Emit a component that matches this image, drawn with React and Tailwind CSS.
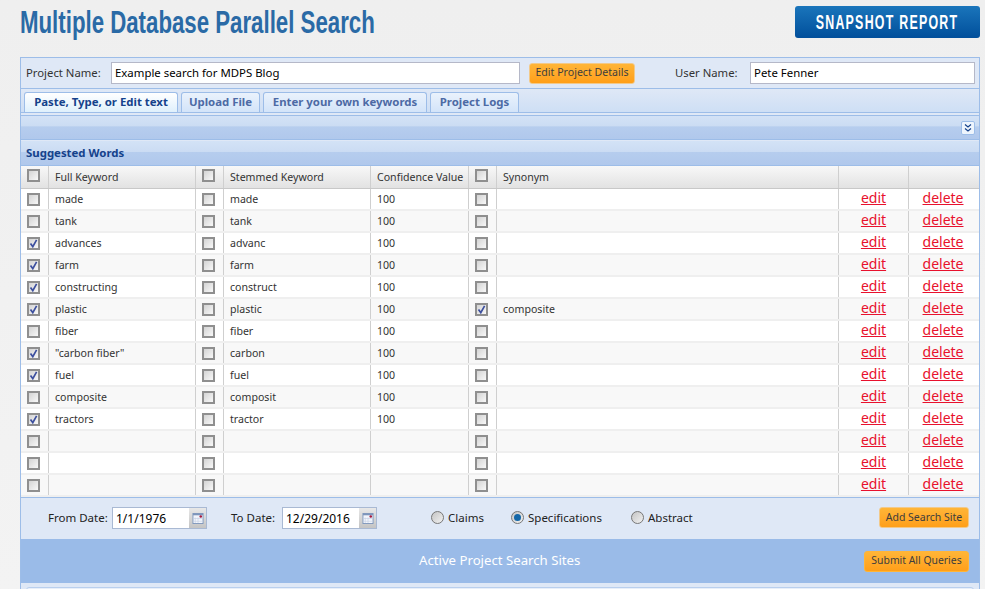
const FONT = "font-['Noto_Sans',_'Open_Sans',_sans-serif]";

const rows = [
  { a: false, full: 'made', stem: 'made', conf: '100' },
  { a: false, full: 'tank', stem: 'tank', conf: '100' },
  { a: true, full: 'advances', stem: 'advanc', conf: '100' },
  { a: true, full: 'farm', stem: 'farm', conf: '100' },
  { a: true, full: 'constructing', stem: 'construct', conf: '100' },
  { a: true, full: 'plastic', stem: 'plastic', conf: '100', syn: 'composite' },
  { a: false, full: 'fiber', stem: 'fiber', conf: '100' },
  { a: true, full: '"carbon fiber"', stem: 'carbon', conf: '100' },
  { a: true, full: 'fuel', stem: 'fuel', conf: '100' },
  { a: false, full: 'composite', stem: 'composit', conf: '100' },
  { a: true, full: 'tractors', stem: 'tractor', conf: '100' },
  { a: false },
  { a: false },
  { a: false },
];

function Check({ on }) {
  return (
    <span className="block w-[13px] h-[13px] border-2 border-[#8f8f8f] bg-gradient-to-br from-[#d4d4d4] to-[#f8f8f8] relative">
      {on && (
        <svg viewBox="0 0 13 13" className="absolute -left-[2px] -top-[2px] w-[13px] h-[13px]">
          <path d="M3.5 6.5 L5.8 9.6 L9.6 2.8" fill="none" stroke="#3c4f9e" strokeWidth="1.7" />
        </svg>
      )}
    </span>
  );
}

function Radio({ on }) {
  return (
    <span className="flex items-center justify-center w-[13px] h-[13px] rounded-full border border-[#777] bg-gradient-to-br from-[#c4c4c4] to-[#f2f2f2]">
      {on && <span className="block w-[7px] h-[7px] rounded-full bg-[#1467a8]" />}
    </span>
  );
}

function OrangeBtn({ children, className = '' }) {
  return (
    <button className={`h-[21px] rounded-[3px] border border-[#f2c98a] bg-gradient-to-b from-[#ffb537] to-[#ff9f18] text-[#3d3d3d] whitespace-nowrap ${className}`}>
      {children}
    </button>
  );
}

function CalIcon() {
  return (
    <span className="w-[17px] h-full flex items-start justify-center pt-[5px] bg-gradient-to-b from-[#e8e8e8] to-[#c4c4c4]">
      <svg viewBox="0 0 12 12" className="w-[12px] h-[11px]">
        <rect x="0.5" y="0.5" width="11" height="11" fill="#f2f5fb" stroke="#7d95bb" />
        <rect x="0.5" y="0.5" width="11" height="2" fill="#7d95bb" />
        <path d="M3 5V11M6 5V11M1 6H11M1 9H11" stroke="#c3cfe3" strokeWidth="0.7" />
        <circle cx="9" cy="3.8" r="1.4" fill="#a3163a" />
      </svg>
    </span>
  );
}

function DateBox({ value }) {
  return (
    <span className="flex items-stretch w-[95px] h-[22px] border border-[#a9b9d3] bg-white">
      <span className="flex-1 pl-[3px] text-[12px] leading-[21px] text-black">{value}</span>
      <CalIcon />
    </span>
  );
}

const CELL = 'flex items-center border-r border-[#cfcfcf] h-full';

function Row({ r, i }) {
  const bg = i % 2 === 0 ? 'bg-white' : 'bg-[#f8f8f8]';
  return (
    <div className={`flex h-[22px] border-b-2 border-[#efefef] text-[10.6px] text-[#333] ${bg}`}>
      <div className={`${CELL} w-[28px] justify-center pr-[2px]`}><Check on={r.a} /></div>
      <div className={`${CELL} w-[147px] pl-[6px] pt-[2px]`}>{r.full}</div>
      <div className={`${CELL} w-[28px] justify-center pr-[3px]`}><Check /></div>
      <div className={`${CELL} w-[147px] pl-[6px] pt-[2px]`}>{r.stem}</div>
      <div className={`${CELL} w-[98px] pl-[6px] pt-[2px]`}>{r.conf}</div>
      <div className={`${CELL} w-[28px] justify-center pr-[3px]`}><Check on={!!r.syn} /></div>
      <div className={`${CELL} w-[342px] pl-[6px] pt-[2px]`}>{r.syn}</div>
      <div className={`${CELL} w-[70px] justify-center pb-[3px] text-[14px] text-[#e8112d] underline`}>edit</div>
      <div className="flex items-center justify-center w-[70px] pr-[2px] pb-[3px] text-[14px] text-[#e8112d] underline">delete</div>
    </div>
  );
}

export default function App() {
  return (
    <div className={`w-[985px] h-[589px] overflow-hidden bg-gradient-to-b from-[#efefef] to-[#f3f3f3] ${FONT}`}>
      <div className="flex items-start justify-between h-[57px] pl-[20px] pr-[5px]">
        <h1 className="mt-[3px] text-[32px] leading-[38px] font-bold text-[#2a6aa6] font-['Liberation_Sans',_sans-serif] scale-x-[0.695] origin-left whitespace-nowrap">
          Multiple Database Parallel Search
        </h1>
        <div className="mt-[6px] flex items-center justify-center w-[185px] h-[32px] rounded-[3px] bg-gradient-to-b from-[#1a75bb] to-[#024f9b] text-white text-[20px] font-bold tracking-[2px] font-['Liberation_Sans',_sans-serif] whitespace-nowrap">
          <span className="scale-x-[0.62]">SNAPSHOT REPORT</span>
        </div>
      </div>

      <div className="mx-[20px] w-[960px] h-[532px] border border-b-0 border-[#9dbde8] bg-[#dfe8f6] text-[#333]">
        {/* project line */}
        <div className="flex items-center h-[31px] border-b border-[#9dbde8] pl-[5px] text-[11.3px]">
          <span className="w-[85px]">Project Name:</span>
          <div className="w-[409px] h-[22px] pl-[3px] border border-[#b5b8c8] bg-white text-[11.4px] leading-[20px] text-black">Example search for MDPS Blog</div>
          <OrangeBtn className="ml-[9px] w-[106px] text-[10.6px]">Edit Project Details</OrangeBtn>
          <span className="ml-[40px] w-[75px]">User Name:</span>
          <div className="w-[225px] h-[22px] pl-[3px] border border-[#b5b8c8] bg-white text-[11.4px] leading-[20px] text-black">Pete Fenner</div>
        </div>

        {/* tabs */}
        <div className="flex items-end gap-[3px] h-[24px] pl-[3px] bg-gradient-to-b from-[#dfe8f6] to-[#cedff5] border-b border-[#9dbde8] text-[11.4px] font-bold text-[#4d6aa5]">
          <div className="flex items-center justify-center w-[154px] h-[20px] pb-[2px] rounded-t-[3px] border border-b-0 border-[#9dbde8] bg-gradient-to-b from-white to-[#dff0fc] text-[#15428b]">Paste, Type, or Edit text</div>
          <div className="flex items-center justify-center w-[79px] h-[20px] pb-[2px] rounded-t-[3px] border border-b-0 border-[#9dbde8] bg-gradient-to-b from-[#eaf2fc] to-[#d3e4f9]">Upload File</div>
          <div className="flex items-center justify-center w-[164px] h-[20px] pb-[2px] rounded-t-[3px] border border-b-0 border-[#9dbde8] bg-gradient-to-b from-[#eaf2fc] to-[#d3e4f9]">Enter your own keywords</div>
          <div className="flex items-center justify-center w-[89px] h-[20px] pb-[2px] rounded-t-[3px] border border-b-0 border-[#9dbde8] bg-gradient-to-b from-[#eaf2fc] to-[#d3e4f9]">Project Logs</div>
        </div>

        {/* collapsed strip */}
        <div className="flex items-center justify-end mt-[2px] h-[25px] pr-[4px] border-t border-b border-[#9dbde8] bg-[linear-gradient(#d3e2f6_0%,#cbdcf3_45%,#b6cdee_46%,#b0c8ec_100%)]">
          <span className="flex items-center justify-center w-[14px] h-[14px] rounded-[2px] border border-[#9dbde8] bg-[#eef5fd]">
            <svg viewBox="0 0 10 10" className="w-[10px] h-[10px]">
              <path d="M2 1.5 L5 4 L8 1.5 M2 5.5 L5 8 L8 5.5" fill="none" stroke="#15428b" strokeWidth="1.2" />
            </svg>
          </span>
        </div>

        {/* suggested words */}
        <div className="flex items-center mt-[1px] h-[25px] pl-[5px] border-b border-[#9dbde8] text-[11.4px] font-bold text-[#15428b] bg-[linear-gradient(#d3e2f6_0%,#cbdcf3_45%,#b6cdee_46%,#b0c8ec_100%)]">
          Suggested Words
        </div>

        {/* grid header */}
        <div className="flex h-[23px] border-b border-[#c8c8c8] bg-gradient-to-b from-[#f8f8f8] to-[#e2e2e2] text-[10.6px] text-[#333]">
          <div className={`${CELL} w-[28px] justify-center pr-[2px] pb-[4px]`}><Check /></div>
          <div className={`${CELL} w-[147px] pl-[6px] pt-[2px]`}>Full Keyword</div>
          <div className={`${CELL} w-[28px] justify-center pr-[3px] pb-[4px]`}><Check /></div>
          <div className={`${CELL} w-[147px] pl-[6px] pt-[2px]`}>Stemmed Keyword</div>
          <div className={`${CELL} w-[98px] pl-[6px] pt-[2px]`}>Confidence Value</div>
          <div className={`${CELL} w-[28px] justify-center pr-[3px] pb-[4px]`}><Check /></div>
          <div className={`${CELL} w-[342px] pl-[6px] pt-[2px]`}>Synonym</div>
          <div className={`${CELL} w-[70px]`} />
          <div className="w-[70px]" />
        </div>

        {rows.map((r, i) => <Row key={i} r={r} i={i} />)}

        {/* date filters */}
        <div className="flex items-center h-[42px] pb-[2px] border-t border-[#9dbde8] text-[11.5px] text-[#222]">
          <span className="ml-[27px] w-[64px]">From Date:</span>
          <DateBox value="1/1/1976" />
          <span className="ml-[24px] w-[51px] whitespace-nowrap">To Date:</span>
          <DateBox value="12/29/2016" />
          <label className="ml-[54px] flex items-center gap-[4px] w-[80px]"><Radio />Claims</label>
          <label className="flex items-center gap-[4px] w-[120px]"><Radio on />Specifications</label>
          <label className="flex items-center gap-[4px] w-[248px]"><Radio />Abstract</label>
          <OrangeBtn className="w-[90px] text-[10.5px]">Add Search Site</OrangeBtn>
        </div>

        {/* active sites */}
        <div className="flex items-center h-[44px] bg-[#9abbe8] text-white text-[13.2px]">
          <span className="flex-1 pl-[398px]">Active Project Search Sites</span>
          <OrangeBtn className="mr-[10px] w-[105px] border-[#ffb537] text-[10.4px]">Submit All Queries</OrangeBtn>
        </div>

        <div className="mt-[4px] mx-[5px] h-[10px] rounded-t-[3px] border border-[#b9cfee] bg-[#e8eff9]" />
      </div>
    </div>
  );
}
